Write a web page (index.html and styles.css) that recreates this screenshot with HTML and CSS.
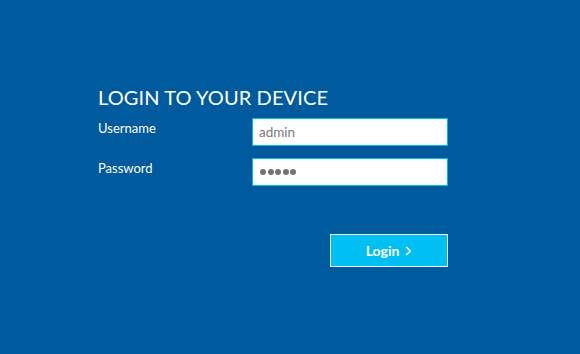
FILE: index.html
```html
<!DOCTYPE html>
<html>
<head>
<meta charset="utf-8">
<link rel="stylesheet" href="styles.css">
</head>
<body>
<main class="page">
  <form class="login">
    <h1 class="title">LOGIN TO YOUR DEVICE</h1>
    <div class="row">
      <label class="label">Username</label>
      <div class="field">admin</div>
    </div>
    <div class="row">
      <label class="label">Password</label>
      <div class="field dots" aria-label="password"><i></i><i></i><i></i><i></i><i></i></div>
    </div>
    <div class="actions">
      <button type="button" class="btn">Login <svg class="chev" width="7" height="10" viewBox="0 0 7 10"><path d="M1.2 1 L5.3 5 L1.2 9" fill="none" stroke="#fff" stroke-width="1.6"/></svg></button>
    </div>
  </form>
</main>
</body>
</html>
```
FILE: styles.css
```css
html, body {
  margin: 0;
  padding: 0;
  background: #005a9e;
}
body {
  width: 580px;
  height: 354px;
  overflow: hidden;
  font-family: "Lato", "Open Sans", sans-serif;
  color: #fff;
}
.page {
  padding: 84px 0 0 98px;
}
.login {
  width: 350px;
  display: flex;
  flex-direction: column;
}
.title {
  margin: 0 0 8px 0;
  font-size: 20px;
  font-weight: 400;
  line-height: 26px;
  letter-spacing: 0.1px;
}
.row {
  display: grid;
  grid-template-columns: 154px 196px;
  align-items: start;
  margin-bottom: 12px;
}
.label {
  font-size: 13px;
  line-height: 16px;
  padding-top: 2px;
}
.field {
  box-sizing: border-box;
  height: 28px;
  border: 1px solid #00b7f1;
  background: #fff;
  color: #7a7a7a;
  font-size: 13.5px;
  line-height: 26px;
  padding-left: 6px;
}
.dots {
  display: flex;
  align-items: center;
  gap: 1.5px;
  padding-left: 7px;
}
.dots i {
  width: 6px;
  height: 6px;
  border-radius: 50%;
  background: #737373;
}
.actions {
  display: flex;
  justify-content: flex-end;
  padding-top: 36px;
}
.btn {
  box-sizing: border-box;
  width: 118px;
  height: 33px;
  background: #00bff3;
  border: 1px solid #fff;
  color: #fff;
  font-family: "Lato", sans-serif;
  font-weight: 700;
  font-size: 14px;
  display: flex;
  align-items: center;
  justify-content: center;
  gap: 6px;
  padding: 0;
}
```
